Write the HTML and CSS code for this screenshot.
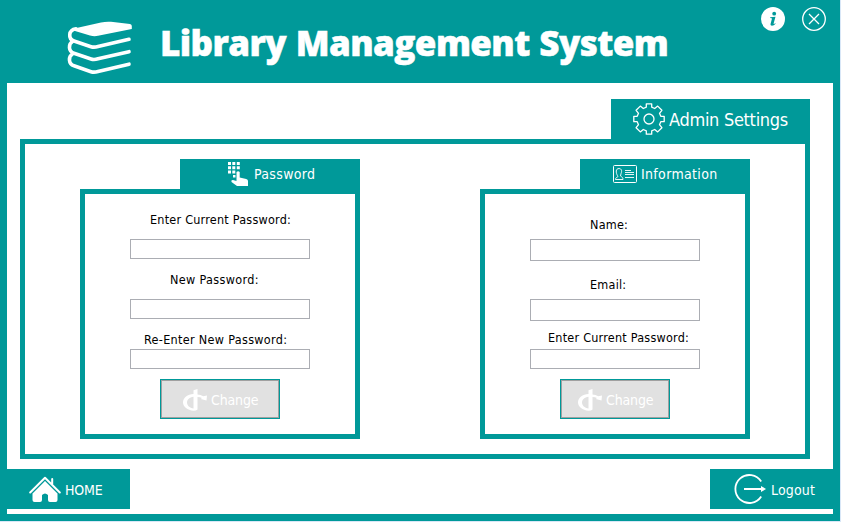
FILE: index.html
```html
<!DOCTYPE html>
<html lang="en">
<head>
<meta charset="utf-8">
<title>Library Management System</title>
<link rel="stylesheet" href="styles.css">
</head>
<body>
<svg width="0" height="0" class="defs">
  <symbol id="change" viewBox="0 0 24 22">
    <path fill="#fff" fill-rule="evenodd" d="M10.500 5V1.200L14.500 0V5.500C16.500 5.700 18.500 6.300 20.300 7.300L24 6.500 23.500 11.500 17.800 10 19 9C17.700 8.300 16.200 8 14.500 7.900V20.500Q13 21.800 10.500 21.700C4.500 21 0 17.700 0 13.400 0 8.800 4.700 5.400 10.500 5zM10.500 7.700C6.500 8.300 4 10.500 4 13.400 4 16.400 6.500 18.700 10.500 19.500z"/>
  </symbol>
</svg>
<div class="window">
  <header class="header">
    <svg class="books" width="66" height="54" viewBox="0 0 66 54">
      <path fill="#fff" d="M5 8 34 1.500Q39 .4 44 .8L63 3Q64.800 3.300 64.800 5V8L31 14.800Q27 15.800 23 14.400L8 10z"/>
      <g fill="none" stroke="#fff" stroke-width="3.600" stroke-linecap="round">
        <path d="M9 7.800C1 9 1 18 7 20L24 25.700Q27 26.700 31 25.500L62 18.300"/>
        <path d="M5.500 20.500C1.200 23 1.200 30.500 7 32.300L24 38Q27 39 31 37.800L62 30.700"/>
        <path d="M5.500 33C1.200 35.500 1.200 43 7 44.800L24 50.700Q27 51.700 31 50.500L62 43.200"/>
      </g>
    </svg>
    <h1 class="title">Library Management System</h1>
    <div class="controls">
      <svg width="24" height="24" viewBox="0 0 24 24"><circle cx="12" cy="12" r="12" fill="#fff"/><circle cx="13.200" cy="6.700" r="1.900" fill="#099"/><path fill="#099" d="M9.200 10.200 14.500 9.700 12.600 16.500Q12.500 17.500 14.400 16.200L14.600 16.800C12.500 19.300 9 19.600 9.600 16.800L11 11.400Q10.800 10.900 9.200 10.900z"/></svg>
      <svg width="24" height="24" viewBox="0 0 24 24" fill="none" stroke="#fff" stroke-width="1.300"><circle cx="12" cy="12" r="11.300"/><path d="m7 7 10 10M17 7 7 17"/></svg>
    </div>
  </header>
  <main class="content">
    <div class="tab tab-admin">
      <svg width="32" height="32" viewBox="0 0 32 32" fill="none" stroke="#fff" stroke-width="1.300" stroke-linejoin="round"><circle cx="16" cy="16" r="5"/><path d="M13.300.8h5.400v3.400l3 1.300 3-2.400 4.200 4.200-2.400 3 1.300 3h3.400v5.400h-3.400l-1.300 3 2.400 3-4.200 4.200-3-2.400-3 1.300v3.400h-5.400v-3.400l-3-1.300-3 2.400-4.200-4.200 2.400-3-1.300-3H.8v-5.400h3.400l1.300-3-2.400-3 4.200-4.200 3 2.400 3-1.300z"/></svg>
      <span>Admin Settings</span>
    </div>
    <section class="settings">
      <div class="group group-password">
        <div class="tab tab-small">
          <svg width="22" height="26" viewBox="0 0 22 26" fill="#fff"><path d="M1 1h3v3H1zM5.300 1h3v3h-3zM9.800 1h3v3h-3zM1 5.300h3v3H1zM5.300 5.300h3v3h-3zM9.800 5.300h3v3h-3zM1 9.600h3v3H1zM5.300 9.600h3v3h-3zM6 14h2.500v2.500H6z"/><path d="M9.500 11q1.600-1.600 3.200 0v5.500l6.500 1.500q1.800.5 1.800 2V25H10L4.500 21q-.8-2.200 1.500-2l3.500 1z"/></svg>
          <span>Password</span>
        </div>
        <form class="panel">
          <label class="l1" for="p1">Enter Current Password:</label>
          <input id="p1" type="password">
          <label class="l2" for="p2">New Password:</label>
          <input id="p2" type="password">
          <label class="l3" for="p3">Re-Enter New Password:</label>
          <input id="p3" type="password">
          <button type="button" disabled><svg width="24" height="22"><use href="#change"/></svg><span>Change</span></button>
        </form>
      </div>
      <div class="group group-info">
        <div class="tab tab-small">
          <svg width="24" height="18" viewBox="0 0 24 18" fill="none" stroke="#fff"><rect x=".5" y=".5" width="23" height="17" rx="1"/><path stroke-width=".9" d="M2.500 14.500c0-2 1.500-2 2.500-3C3.500 9.500 2 4.500 5 3.700c3-.8 4.500 1.500 3 5l-.5 2.300c1.500 1 2.500 1.500 2.500 3.500zM12 5.500h6M12 7.500h9M12 9.500h9M12 12.500h9"/></svg>
          <span>Information</span>
        </div>
        <form class="panel">
          <label class="l4" for="i1">Name:</label>
          <input class="tall" id="i1" type="text">
          <label class="l5" for="i2">Email:</label>
          <input class="tall" id="i2" type="text">
          <label class="l6" for="i3">Enter Current Password:</label>
          <input id="i3" type="password">
          <button type="button" disabled><svg width="24" height="22"><use href="#change"/></svg><span>Change</span></button>
        </form>
      </div>
    </section>
    <footer class="footer">
      <div class="nav home">
        <svg width="32" height="27" viewBox="0 0 32 27"><path fill="none" stroke="#fff" stroke-width="2" stroke-linecap="round" stroke-linejoin="round" d="M1.200 16.500 16 1.800 30.800 16.500M23.200 3v5"/><path fill="#fff" d="M16 5 28.500 17.500V24q0 2-2 2H21q-2 0-2-2V19q-3-3-6 0v5q0 2-2 2H5.500q-2 0-2-2V17.500z"/></svg>
        <span>HOME</span>
      </div>
      <div class="nav logout">
        <svg width="33" height="30" viewBox="0 0 33 30"><path fill="none" stroke="#fff" stroke-width="1.800" d="M27.200 7.500A14 14 0 1 0 27.200 22.500M10 15H29"/><path fill="#fff" d="M27 12 32 15 27 18z"/></svg>
        <span>Logout</span>
      </div>
    </footer>
  </main>
</div>
</body>
</html>
```

FILE: styles.css
```css
* { box-sizing: border-box; }
body {
  margin: 0;
  background: #d9e7f7;
  font-family: "DejaVu Sans Condensed", "DejaVu Sans", sans-serif;
  font-stretch: condensed;
  overflow: hidden;
}
svg { display: block; flex: none; }
.defs { display: none; }
.window { width: 840px; height: 521px; background: #099; padding: 0 7px 7px; }
.header { height: 83px; display: flex; align-items: flex-start; color: #fff; }
.books { margin: 21px 0 0 60px; }
.title {
  margin: 19px 0 0 27px;
  width: 520px;
  font: 800 35px/48px "Open Sans", sans-serif;
  letter-spacing: -0.6px;
  word-spacing: 1.2px;
  white-space: nowrap;
  -webkit-text-stroke: 0.5px #fff;
}
.controls { display: flex; gap: 17px; margin: 7px 0 0 81px; }
.content { height: 431px; background: #fff; padding: 16px 0 0; }
.tab, .nav { display: flex; align-items: center; background: #099; color: #fff; white-space: nowrap; }
.tab-admin { width: 199px; height: 40px; margin-left: 604px; padding-left: 22px; gap: 4px; font-size: 18px; letter-spacing: -0.3px; }
.settings {
  width: 790px; height: 320px; margin-left: 13px;
  border: 5px solid #099; padding: 15px 55px;
  display: flex; justify-content: space-between;
}
.group { display: flex; flex-direction: column; align-items: flex-end; }
.group-password { width: 280px; }
.group-info { width: 270px; }
.tab-small { height: 30px; font-size: 14px; letter-spacing: 0.33px; }
.group-password .tab-small { width: 180px; padding-left: 47px; gap: 5px; }
.group-info .tab-small { width: 170px; padding-left: 33px; gap: 4px; }
.panel { width: 100%; height: 250px; border: 5px solid #099; padding: 15px 45px 0; }
label { display: block; height: 20px; font-size: 12.5px; letter-spacing: 0.23px; line-height: 21px; white-space: nowrap; }
input { display: block; width: 100%; height: 20px; border: 1px solid #abadb3; background: #fff; padding: 0 2px; }
input.tall { height: 22px; }
.l1 { margin: 0 0 10px 20px; }
.l2 { margin: 10px 0 10px 40px; letter-spacing: 0.35px; }
.l3 { margin: 10px 0 0 14px; letter-spacing: 0.32px; }
.l4 { margin: 5px 0 5px 60px; }
.l5 { margin: 13px 0 5px 60px; }
.l6 { margin: 6px 0 2px 18px; }
button {
  display: flex; align-items: center; gap: 4px;
  width: 120px; height: 40px; margin: 10px 0 0 30px; padding: 1px 0 0 22px;
  border: 1px solid #099; box-shadow: inset 0 0 0 1px #a0a0a0;
  background: #e1e1e1; color: #fff; font: inherit; font-size: 14px; letter-spacing: -0.15px;
}
.group-info button { width: 110px; padding-left: 17px; }
.footer { display: flex; justify-content: space-between; margin-top: 10px; }
.nav { width: 123px; height: 40px; font-size: 14px; }
.nav span { padding-top: 1px; }
.home { padding-left: 22px; gap: 4px; letter-spacing: -0.2px; }
.logout { padding-left: 24px; gap: 4px; letter-spacing: 0.15px; }
```
